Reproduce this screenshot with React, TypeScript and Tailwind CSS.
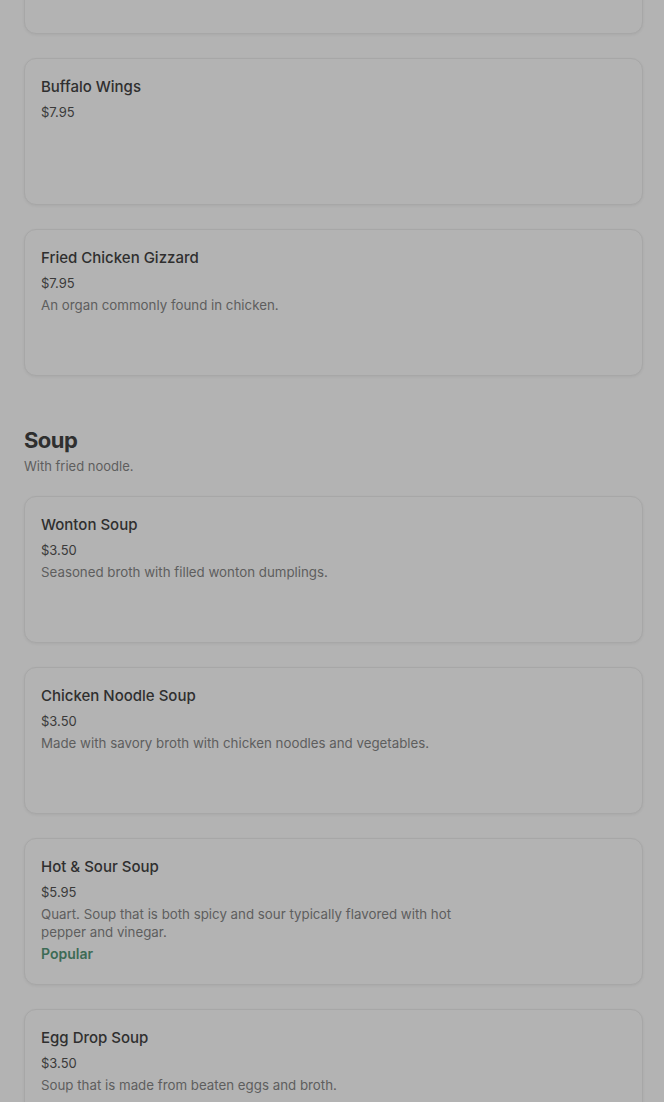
import React from "react";

interface Item {
  name: string;
  price: string;
  description?: string;
  popular?: boolean;
}

const appetizers: Item[] = [
  { name: "Buffalo Wings", price: "$7.95" },
  {
    name: "Fried Chicken Gizzard",
    price: "$7.95",
    description: "An organ commonly found in chicken.",
  },
];

const soups: Item[] = [
  {
    name: "Wonton Soup",
    price: "$3.50",
    description: "Seasoned broth with filled wonton dumplings.",
  },
  {
    name: "Chicken Noodle Soup",
    price: "$3.50",
    description: "Made with savory broth with chicken noodles and vegetables.",
  },
  {
    name: "Hot & Sour Soup",
    price: "$5.95",
    description:
      "Quart. Soup that is both spicy and sour typically flavored with hot pepper and vinegar.",
    popular: true,
  },
  {
    name: "Egg Drop Soup",
    price: "$3.50",
    description: "Soup that is made from beaten eggs and broth.",
  },
];

function MenuCard({ item }: { item: Item }) {
  return (
    <div className="h-[147px] rounded-xl border border-[#a7a7a7] bg-[#b3b3b3] px-4 py-4 shadow-[0_1px_3px_rgba(0,0,0,0.06)]">
      <h3 className="text-[15px] leading-[23px] font-medium text-[#2f2f2f]">
        {item.name}
      </h3>
      <p className="mt-[4px] text-[13px] leading-5 text-[#3a3a3a]">{item.price}</p>
      {item.description && (
        <p className="mt-[3px] max-w-[440px] text-[13.3px] leading-[18px] text-[#5e5e5e]">
          {item.description}
        </p>
      )}
      {item.popular && (
        <p className="mt-[3px] text-sm leading-5 font-semibold text-[#3d6b55]">
          Popular
        </p>
      )}
    </div>
  );
}

export default function App() {
  return (
    <div
      className="min-h-[1102px] bg-[#b3b3b3] pl-6 pr-[21px] overflow-hidden"
      style={{ fontFamily: "Inter, 'Noto Sans', sans-serif" }}
    >
      <div className="-mt-[113px] flex flex-col gap-6">
        <MenuCard item={{ name: "", price: "" }} />
        {appetizers.map((item) => (
          <MenuCard key={item.name} item={item} />
        ))}
      </div>

      {/* Soup section */}
      <div className="mt-12">
        <h2 className="text-[22px] leading-8 font-bold tracking-tight text-[#2f2f2f]">
          Soup
        </h2>
        <p className="text-[13px] leading-5 text-[#5e5e5e]">With fried noodle.</p>
      </div>
      <div className="mt-5 flex flex-col gap-6 pb-10">
        {soups.map((item) => (
          <MenuCard key={item.name} item={item} />
        ))}
      </div>
    </div>
  );
}
